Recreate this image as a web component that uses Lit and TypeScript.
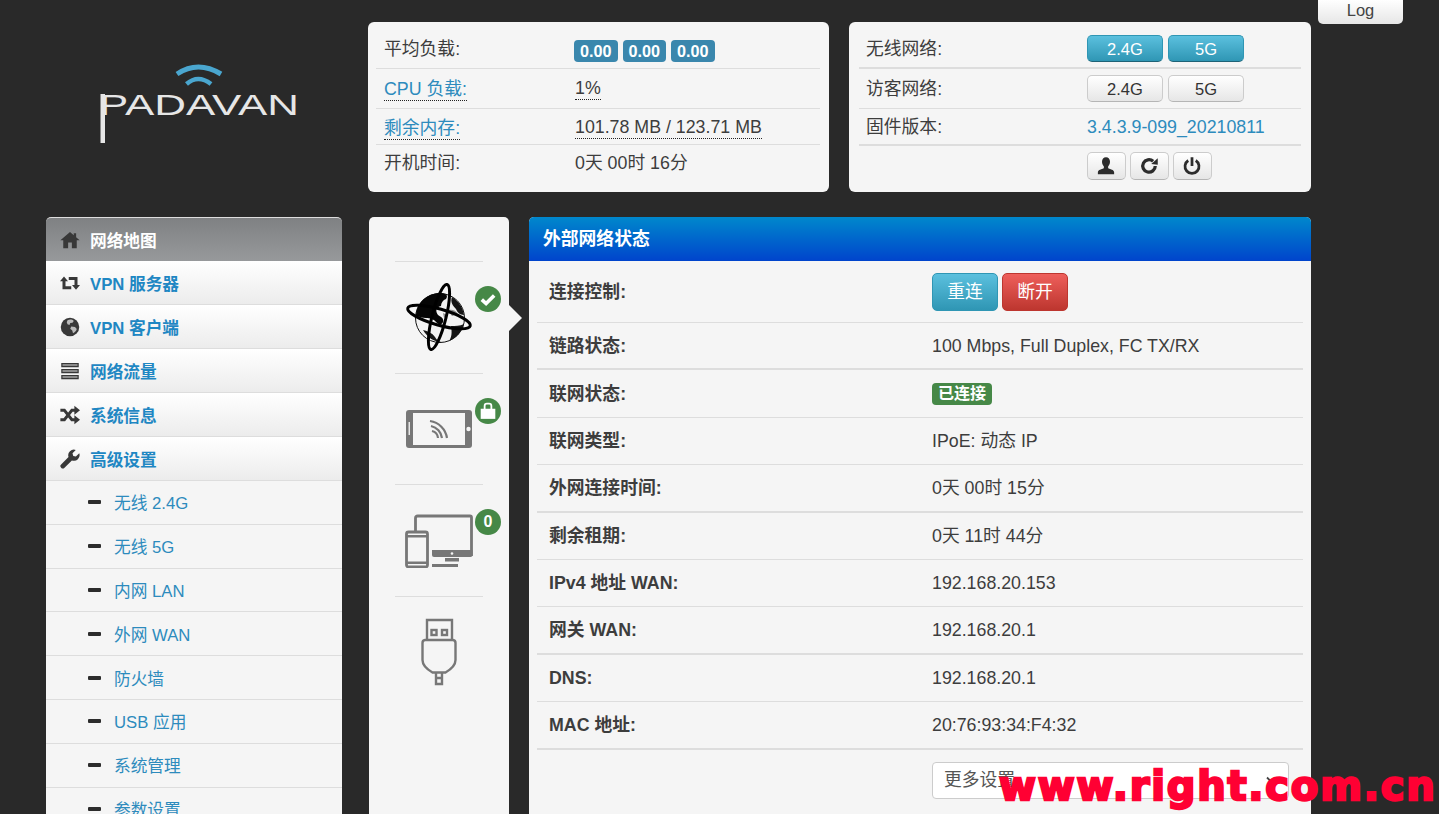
import { LitElement, html, css, svg } from "lit";
import { customElement } from "lit/decorators.js";

const I: Record<string, unknown> = {
  home: svg`<path d="M8 1.500 .3 8.200h2.300v6.300h3.900V10h3v4.500h3.900V8.200h2.300l-2.800-2.500V2.500H11v1.600z"/>`,
  retweet: svg`<path d="M3.200 6v5.700H9M12.800 10V4.300H7" fill="none" stroke="currentColor" stroke-width="2.400"/><path d="M0 6.500h6.400L3.200 2.700zM9.600 9.500H16l-3.200 3.800z"/>`,
  globe: svg`<circle cx="8" cy="8" r="7.400"/><path d="M6 2.500c2-.8 4-.4 5 .6l-1 1.400-1.800.2-.6 1.600-1.600-.6-.6-1.600zM9 7.500l3 .4 1.400 1.600c-.4 1.600-1.600 2.800-3 3.400l-.6-2.200-1.600-1.400z" fill="#bbb"/>`,
  tasks: svg`<path d="M1 1.500h14v3.400H1zM1 6.300h14v3.400H1zM1 11.100h14v3.400H1z"/><path d="M2 2.800h12v.8H2zM2 7.600h12v.8H2zM2 12.400h12v.8H2z" fill="#ddd"/>`,
  random: svg`<path d="M.3 4.200h3.200l6 7.600h3M.3 11.800h3.200l6-7.600h3" fill="none" stroke="currentColor" stroke-width="2.300"/><path d="M11.500 .6 16 4.200l-4.500 3.600zM11.500 8.200l4.500 3.600-4.500 3.600z"/>`,
  wrench: svg`<path d="M15.400 3.400 12.700 6l-2.100-.5L10 3.300 12.600.8a4.500 4.500 0 0 0-5.800 5.600L.9 12.300a1.700 1.700 0 0 0 2.700 2.700l5.900-5.900a4.500 4.500 0 0 0 5.900-5.700z"/>`,
  user: svg`<path d="M8 1c2 0 3.200 1.500 3.200 3.600 0 1.600-.8 3-1.500 3.800v1.400c1.600.7 4.800 1.200 4.800 3.200v1.500h-13V13c0-2 3.200-2.500 4.800-3.200V8.400C5.600 7.600 4.800 6.200 4.800 4.600 4.800 2.500 6 1 8 1z"/>`,
  refresh: svg`<path d="M13 8a5 5 0 1 1-1.700-3.800" fill="none" stroke="currentColor" stroke-width="2.600"/><path d="M9.800 6.400 15 7V1.800z"/>`,
  power: svg`<path d="M5 3.600a5.600 5.600 0 1 0 6 0" fill="none" stroke="currentColor" stroke-width="2.200"/><path d="M6.900 1h2.200v7H6.900z"/>`,
};

const ic = (n: string, cls = "ic") => html`<svg class=${cls} viewBox="0 0 16 16" fill="currentColor">${I[n]}</svg>`;

const NAV = [
  ["retweet", "VPN 服务器"],
  ["globe", "VPN 客户端"],
  ["tasks", "网络流量"],
  ["random", "系统信息"],
  ["wrench", "高级设置"],
];
const SUB = ["无线 2.4G", "无线 5G", "内网 LAN", "外网 WAN", "防火墙", "USB 应用", "系统管理", "参数设置"];
const ROWS: [string, string, boolean][] = [
  ["链路状态:", "100 Mbps, Full Duplex, FC TX/RX", true],
  ["联网状态:", "", false],
  ["联网类型:", "IPoE: 动态 IP", false],
  ["外网连接时间:", "0天 00时 15分", true],
  ["剩余租期:", "0天 11时 44分", false],
  ["IPv4 地址 WAN:", "192.168.20.153", false],
  ["网关 WAN:", "192.168.20.1", true],
  ["DNS:", "192.168.20.1", false],
  ["MAC 地址:", "20:76:93:34:F4:32", true],
];

const globe = html`<svg class="big" width="68" height="68" viewBox="0 0 68 68">
  <circle cx="35" cy="35" r="24.500" fill="#f2f2f2" stroke="#111" stroke-width="1"/>
  <path d="M11 32C12 18 24 9 37 10c5 1 6 3 4 6-3 1-5 4-5 7-5 1-6 5-3 9 3 2 6 3 5 7-1 3-4 3-6 1-3-4-7-5-11-5-4 0-7-1-11-3z" fill="#050505"/>
  <path d="M47 14c6 4 11 10 12 18-4 0-7-3-8-6-3-3-6-7-4-12zM18 47c5 1 9 3 12 7 1 2 3 4 6 5-7 0-14-5-18-12zM46 43c4 0 9 0 13-2-2 8-8 14-15 17 3-4 3-9 2-15z" fill="#161616"/>
  <path d="M43 27c4-1 8 0 10 4l-6 2zM38 30l4 2-3 3z" fill="#8a8a8a"/>
  <ellipse cx="34" cy="34" rx="32.500" ry="8" fill="none" stroke="#000" stroke-width="3" transform="rotate(16 34 34)"/>
  <ellipse cx="34" cy="34" rx="33.500" ry="7" fill="none" stroke="#000" stroke-width="3" transform="rotate(-76 34 34)"/>
</svg>`;
const phone = html`<svg class="big" width="68" height="40" viewBox="0 0 68 40">
  <rect x="1" y="1" width="66" height="38" rx="3" fill="#777"/>
  <rect x="8" y="4" width="52" height="32" fill="#f5f5f5"/>
  <rect x="3.500" y="13" width="1.500" height="13" fill="#e8e8e8"/>
  <circle cx="63.500" cy="20" r="2.200" fill="#f5f5f5"/>
  <path d="M25 12a20 20 0 0 1 17 17M26 17a14 14 0 0 1 11 12M27 22a8 8 0 0 1 6 7" fill="none" stroke="#777" stroke-width="2.200"/>
</svg>`;
const devices = html`<svg class="big" width="68" height="54" viewBox="0 0 68 54">
  <path d="M10.500 17V4a2 2 0 0 1 2-2H65a1.500 1.500 0 0 1 1.500 1.500V42" fill="none" stroke="#777" stroke-width="2.800"/>
  <path d="M27 36h40.500v5a2 2 0 0 1-2 2H29a2 2 0 0 1-2-2z" fill="#777"/>
  <circle cx="47" cy="39.500" r="1.300" fill="#f5f5f5"/>
  <rect x="40" y="44" width="14" height="3.500" fill="#777"/>
  <rect x="27" y="50" width="26" height="3" fill="#777"/>
  <rect x="1.500" y="18" width="21" height="35" rx="2" fill="none" stroke="#777" stroke-width="2.800"/>
  <path d="M1.500 21h21v2.500h-21zM1.500 47.500h21V50h-21z" fill="#777"/>
</svg>`;
const usb = html`<svg class="big" width="38" height="68" viewBox="0 0 38 68" fill="none" stroke="#777" stroke-width="2.400">
  <path d="M7 21V2h25v19"/>
  <rect x="11.500" y="12" width="5" height="5"/><rect x="22" y="12" width="5" height="5"/>
  <path d="M5 22h28a3 3 0 0 1 2.500 3v17c0 5-4 9-10 12.500h-13C6.500 51 2.500 47 2.500 42V25A3 3 0 0 1 5 22z"/>
  <path d="M16 55v11h6V55M16 60h6"/>
</svg>`;

@customElement("app-root")
export class AppRoot extends LitElement {
  static styles = css`
    :host {
      display: block;
      height: 814px;
      overflow: hidden;
      position: relative;
      background: #292929;
      color: #3d3d3d;
      font: 17.800px/26px "Liberation Sans", "Noto Sans CJK SC", sans-serif;
    }
    * { box-sizing: border-box; }
    .top { display: flex; padding-left: 46px; height: 217px; align-items: flex-start; }
    .logo { display: block; width: 296px; height: 160px; margin-right: 26px; flex: none; }
    .logo text { font: 400 30px "Liberation Sans", sans-serif; fill: #e6e6e6; }
    .card { background: #f5f5f5; border-radius: 6px; margin-top: 22px; height: 170px; flex: none; }
    .c1 { width: 461px; padding: 8px 9px 0 8px; margin-right: 20px; }
    .c2 { width: 462px; padding: 8px 10px 0; }
    .kv { display: flex; align-items: center; border-bottom: 1px solid #ddd; padding-left: 8px; }
    .c2 .kv { padding-left: 7px; }
    .kv.last { border-bottom: 0; }
    .kv .k { width: 191px; flex: none; }
    .c2 .kv .k { width: 221px; }
    .kv.h39 { height: 39px; }
    .kv.h40 { height: 40px; }
    .kv.h36 { height: 36px; }
    .kv.h37 { height: 37px; }
    .kv.low { padding-top: 2px; }
    .kv.thick { border-bottom-width: 2px; }
    a, .link { color: #2d8bbd; text-decoration: none; }
    .dot { border-bottom: 1px dotted #222; line-height: 21px; display: inline-block; }
    .loads { margin: 3px 0 0 -1px; display: flex; }
    .badge {
      display: block; background: #3a87ad; color: #fff; font-weight: 700; font-size: 16.200px;
      line-height: 22px; padding: 0 6px; border-radius: 4px; margin-right: 5px;
    }
    .btn {
      display: inline-flex; align-items: center; justify-content: center; height: 27px; width: 76px; margin-right: 5px;
      border: 1px solid #ccc; border-bottom-color: #b5b5b5; border-radius: 5px; font-size: 16.500px;
      background: linear-gradient(#fff, #e6e6e6); color: #333;
    }
    .btn.on { background: linear-gradient(#5bc0de, #2f96b4); border-color: #2f96b4 #2f96b4 #1f6377; color: #fff; }
    .btns { padding-top: 6px; align-items: flex-start; }
    .btn.icb { width: 38.500px; height: 28px; margin-right: 4.500px; color: #2c2c2c; }
    .btn.icb svg { width: 20px; height: 20px; }
    .log {
      margin-left: 7px; width: 85px; height: 24px; flex: none; text-align: center; font-size: 16.500px; line-height: 21px;
      border-radius: 0 0 5px 5px; background: linear-gradient(#fff, #e6e6e6); color: #444;
    }
    .main { display: flex; padding-left: 46px; }
    .side { width: 296px; flex: none; margin-right: 27px; font-size: 16.700px; }
    .item {
      display: flex; align-items: center; height: 44px; padding-left: 14px; font-weight: 700; color: #1f87c3;
      background: linear-gradient(#fff, #ececec); border-bottom: 1px solid #ddd;
    }
    .item.active {
      background: linear-gradient(#7f8183, #97999b); color: #fff; border: 0; border-top: 1px solid #ddd;
      border-radius: 5px 5px 0 0;
    }
    .t { padding-top: 4px; }
    .ic { width: 20px; height: 20px; margin-right: 10px; flex: none; color: #383838; }
    .sub {
      display: flex; align-items: center; height: 43.800px; padding-left: 42px; color: #2d8bbd;
      background: #f5f5f5; border-bottom: 1px solid #ddd;
    }
    .minus { width: 13px; height: 4px; background: #2c2c2c; border-radius: 1px; margin-right: 13px; }
    .icons { width: 140px; height: 597px; flex: none; background: #f5f5f5; padding: 44px 26px 0; margin-right: 20px; border-radius: 5px 5px 0 0; }
    .cell { position: relative; display: flex; align-items: center; justify-content: center; height: 111.700px; border-top: 1px solid #ddd; }
    .bubble {
      position: absolute; left: 80px; top: 24px; width: 26px; height: 26px; border-radius: 50%; background: #468847;
      color: #fff; font-weight: 700; font-size: 16px; display: flex; align-items: center; justify-content: center;
    }
    .bubble svg { width: 18px; height: 18px; }
    .arrow {
      position: absolute; left: 114px; top: 43px; width: 0; height: 0;
      border: 13px solid transparent; border-left: 13px solid #f5f5f5; border-right: 0;
    }
    .panel { width: 782px; flex: none; background: #f5f5f5; height: 597px; border-radius: 5px 5px 0 0; }
    .head {
      height: 44px; padding-left: 14px; display: flex; align-items: center; color: #fff; font-weight: 700;
      background: linear-gradient(#0088cc, #0044cc); border-radius: 5px 5px 0 0;
    }
    .body { padding: 0 8px; }
    .row { display: flex; align-items: center; height: 47.400px; padding-left: 12px; border-bottom: 1px solid #ddd; }
    .row.first { height: 62px; }
    .row.thick { border-bottom-width: 2px; }
    .row .k { width: 383px; font-weight: 700; flex: none; }
    .row.end { border: 0; height: auto; padding-top: 12px; }
    .act {
      display: inline-flex; align-items: center; justify-content: center; width: 66px; height: 38px; margin-right: 4px;
      border-radius: 5px; color: #fff; border: 1px solid #2f96b4; background: linear-gradient(#5bc0de, #2f96b4);
    }
    .act.red { border-color: #bd362f; background: linear-gradient(#ee5f5b, #bd362f); }
    .ok {
      display: inline-block; height: 22px; line-height: 22px; padding: 0 6px; border-radius: 4px; background: #468847;
      color: #fff; font-weight: 700; font-size: 16px;
    }
    .select {
      display: flex; align-items: center; justify-content: space-between; width: 357px; height: 37px; padding: 0 10px 0 11px;
      background: #fff; border: 1px solid #ccc; border-radius: 4px; color: #555;
    }
    .select svg { width: 12px; height: 8px; }
    .mark {
      position: absolute; left: 999px; top: 760px; white-space: nowrap; color: #ff0033;
      font: 900 40px/52px "DejaVu Sans", sans-serif; -webkit-text-stroke: 2.400px #ff0033; letter-spacing: 1.800px;
    }
  `;

  render() {
    return html`
      <div class="top">
        <svg class="logo" viewBox="0 0 296 160">
          <path d="M131 74Q152 60 175 74" fill="none" stroke="#4aa6cf" stroke-width="5"/>
          <path d="M140.500 84Q152 74 165 84" fill="none" stroke="#4aa6cf" stroke-width="4.500"/>
          <text x="53" y="114.500" textLength="200" lengthAdjust="spacingAndGlyphs">PADAVAN</text>
          <rect x="54.500" y="94" width="4.500" height="49" fill="#e6e6e6"/>
        </svg>
        <div class="card c1">
          <div class="kv h39"><span class="k">平均负载:</span><span class="loads"><span class="badge">0.00</span><span class="badge">0.00</span><span class="badge">0.00</span></span></div>
          <div class="kv h40"><span class="k"><span class="link dot">CPU 负载:</span></span><span class="dot">1%</span></div>
          <div class="kv h36 low"><span class="k"><span class="link dot">剩余内存:</span></span><span class="dot">101.78 MB / 123.71 MB</span></div>
          <div class="kv last h36"><span class="k">开机时间:</span><span>0天 00时 16分</span></div>
        </div>
        <div class="card c2">
          <div class="kv h39 thick"><span class="k">无线网络:</span><span class="btn on">2.4G</span><span class="btn on">5G</span></div>
          <div class="kv h40"><span class="k">访客网络:</span><span class="btn">2.4G</span><span class="btn">5G</span></div>
          <div class="kv h37 thick"><span class="k">固件版本:</span><a>3.4.3.9-099_20210811</a></div>
          <div class="kv last btns"><span class="k"></span>
            <span class="btn icb">${ic("user", "")}</span><span class="btn icb">${ic("refresh", "")}</span><span class="btn icb">${ic("power", "")}</span>
          </div>
        </div>
        <div class="log">Log</div>
      </div>
      <div class="main">
        <nav class="side">
          <div class="item active">${ic("home")}<span class="t">网络地图</span></div>
          ${NAV.map(([i, t]) => html`<div class="item">${ic(i)}<span class="t">${t}</span></div>`)}
          ${SUB.map((t) => html`<div class="sub"><span class="minus"></span><span class="t">${t}</span></div>`)}
        </nav>
        <div class="icons">
          <div class="cell">${globe}
            <span class="bubble"><svg viewBox="0 0 16 16"><path d="M2.500 8.500 6.300 12 13.500 4.800" fill="none" stroke="#fff" stroke-width="3.200"/></svg></span>
            <span class="arrow"></span>
          </div>
          <div class="cell">${phone}
            <span class="bubble"><svg viewBox="0 0 16 16"><path d="M1.500 6h13v9h-13z" fill="#fff"/><path d="M5 6.500V3.500a2 2 0 0 1 2-2h2a2 2 0 0 1 2 2v3" fill="none" stroke="#fff" stroke-width="1.600"/></svg></span>
          </div>
          <div class="cell">${devices}<span class="bubble">0</span></div>
          <div class="cell">${usb}</div>
        </div>
        <section class="panel">
          <div class="head">外部网络状态</div>
          <div class="body">
            <div class="row first"><span class="k">连接控制:</span><span class="act">重连</span><span class="act red">断开</span></div>
            ${ROWS.map(([k, v, t]) => html`<div class="row ${t ? "thick" : ""}"><span class="k">${k}</span>${v ? html`<span>${v}</span>` : html`<span class="ok">已连接</span>`}</div>`)}
            <div class="row end"><span class="k"></span>
              <div class="select">更多设置<svg viewBox="0 0 12 8"><path d="M1 1.500 6 6.500 11 1.500" fill="none" stroke="#444" stroke-width="1.800"/></svg></div>
            </div>
          </div>
        </section>
      </div>
      <div class="mark">www.right.com.cn</div>
    `;
  }
}
